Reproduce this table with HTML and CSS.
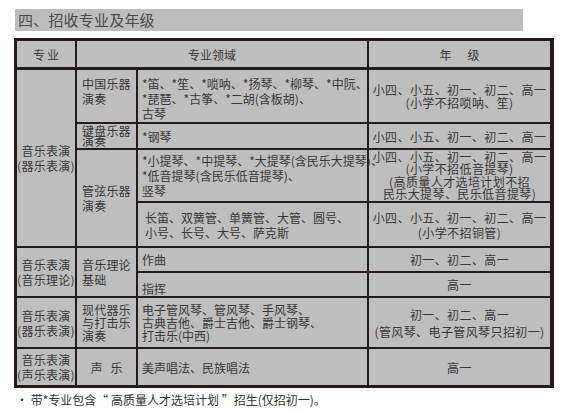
FILE: index.html
```html
<!DOCTYPE html>
<html lang="zh-CN">
<head>
<meta charset="utf-8">
<title>招收专业及年级</title>
<link rel="stylesheet" href="styles.css">
</head>
<body>
<div class="page">
  <div class="title">四、招收专业及年级</div>
  <table class="grid">
    <colgroup>
      <col class="c1"><col class="c2"><col class="c3"><col class="c4">
    </colgroup>
    <thead>
      <tr class="r-head">
        <th class="h-major">专业</th>
        <th colspan="2" class="h-field">专业领域</th>
        <th class="h-grade">年　级</th>
      </tr>
    </thead>
    <tbody>
      <tr class="r1">
        <td rowspan="4" class="major">音乐表演<br>(器乐表演)</td>
        <td class="field top">中国乐器<br>演奏</td>
        <td class="items top">*笛、*笙、*唢呐、*扬琴、*柳琴、*中阮、<br>*琵琶、*古筝、*二胡(含板胡)、<br>古琴</td>
        <td class="grade lh13">小四、小五、初一、初二、高一<br>(小学不招唢呐、笙)</td>
      </tr>
      <tr class="r2">
        <td class="field tight">键盘乐器<br>演奏</td>
        <td class="items">*钢琴</td>
        <td class="grade">小四、小五、初一、初二、高一</td>
      </tr>
      <tr class="r3">
        <td rowspan="2" class="field">管弦乐器<br>演奏</td>
        <td class="items">*小提琴、*中提琴、*大提琴(含民乐大提琴)、<br>*低音提琴(含民乐低音提琴)、<br>竖琴</td>
        <td class="grade lh12">小四、小五、初一、初二、高一<br>(小学不招低音提琴)<br>(高质量人才选培计划不招<br>民乐大提琴、民乐低音提琴)</td>
      </tr>
      <tr class="r4">
        <td class="items indent">长笛、双簧管、单簧管、大管、圆号、<br>小号、长号、大号、萨克斯</td>
        <td class="grade">小四、小五、初一、初二、高一<br>(小学不招铜管)</td>
      </tr>
      <tr class="r5">
        <td rowspan="2" class="major">音乐表演<br>(音乐理论)</td>
        <td rowspan="2" class="field">音乐理论<br>基础</td>
        <td class="items">作曲</td>
        <td class="grade">初一、初二、高一</td>
      </tr>
      <tr class="r6">
        <td class="items low">指挥</td>
        <td class="grade">高一</td>
      </tr>
      <tr class="r7">
        <td class="major">音乐表演<br>(器乐表演)</td>
        <td class="field lh13">现代器乐<br>与打击乐<br>演奏</td>
        <td class="items lh13">电子管风琴、管风琴、手风琴、<br>古典吉他、爵士吉他、爵士钢琴、<br>打击乐(中西)</td>
        <td class="grade lh17">初一、初二、高一<br>(管风琴、电子管风琴只招初一)</td>
      </tr>
      <tr class="r8">
        <td class="major">音乐表演<br>(声乐表演)</td>
        <td class="field center spaced">声乐</td>
        <td class="items">美声唱法、民族唱法</td>
        <td class="grade">高一</td>
      </tr>
    </tbody>
  </table>
  <p class="note">· 带*专业包含“ 高质量人才选培计划 ”招生(仅招初一)。</p>
</div>
</body>
</html>
```

FILE: styles.css
```css
html, body {
  margin: 0;
  padding: 0;
  background: #ffffff;
}

body {
  font-family: "Noto Sans CJK SC", "Noto Sans", sans-serif;
  color: #383838;
  font-size: 12px;
}

.page {
  width: 563px;
  height: 411px;
  padding-top: 9px;
  box-sizing: border-box;
}

.title {
  margin-left: 15px;
  width: 508px;
  height: 22px;
  background: #bdbdbd;
  color: #4a4a4a;
  font-size: 15px;
  letter-spacing: 0.2px;
  line-height: 22px;
  padding-left: 3px;
  box-sizing: border-box;
  white-space: nowrap;
}

.grid {
  margin: 7px 0 0 14px;
  width: 540px;
  table-layout: fixed;
  border-collapse: separate;
  border-spacing: 2px;
  background: #251b1b;
  border-style: solid;
  border-color: #251b1b;
  border-width: 1px 2px 1px 1px;
}

.c1 { width: 58px; }
.c2 { width: 59px; }
.c3 { width: 229px; }
.c4 { width: 181px; }

.grid th,
.grid td {
  background: #bebebe;
  padding: 0;
  white-space: nowrap;
  overflow: visible;
  vertical-align: middle;
  line-height: 15px;
  font-weight: normal;
  box-sizing: border-box;
}

.grid th {
  color: #3a3a3a;
  text-align: center;
  height: 27px;
  border-bottom: 1px solid #251b1b;
}

.grid th.h-major { letter-spacing: 2px; padding-left: 2px; }
.grid th.h-field { padding-right: 20px; }
.grid th.h-grade { letter-spacing: 2px; padding-left: 2px; }

.r1 { height: 52px; }
.r2 { height: 24px; }
.r3 { height: 51px; }
.r4 { height: 43px; }
.r5 { height: 23px; }
.r6 { height: 23px; }
.r7 { height: 49px; }
.r8 { height: 36px; }

.grid td.major {
  text-align: center;
  letter-spacing: 0.3px;
}

.grid td.field {
  text-align: left;
  padding-left: 5px;
  letter-spacing: 0.2px;
}

.grid td.items {
  text-align: left;
  padding-left: 4px;
}

.grid td.grade {
  text-align: center;
  letter-spacing: 0.4px;
}

.grid td.top {
  vertical-align: top;
  padding-top: 6px;
}

.grid td.tight { line-height: 10.5px; }
.grid td.lh12 { line-height: 12.5px; }
.grid td.lh13 { line-height: 13px; }
.grid td.lh17 { line-height: 17px; }

.grid td.indent { padding-left: 7px; }
.grid td.low { padding-top: 8px; }

.grid td.center { text-align: center; }
.grid td.spaced { letter-spacing: 8px; padding-left: 8px; }

.note {
  margin: 4px 0 0 16px;
  font-size: 12px;
  line-height: 15px;
  color: #333333;
  white-space: nowrap;
}
```
